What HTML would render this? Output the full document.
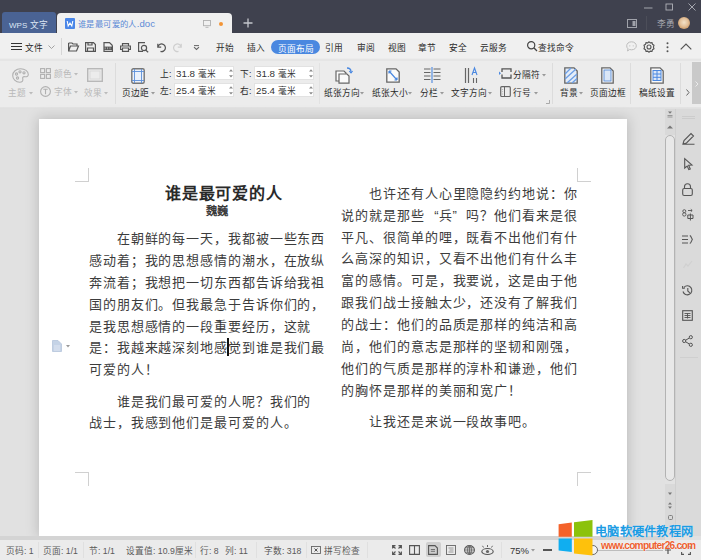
<!DOCTYPE html><html lang="zh-CN"><head><meta charset="utf-8"><style>
*{margin:0;padding:0;box-sizing:border-box}
html,body{width:701px;height:560px;overflow:hidden;background:#e1e1e1;font-family:"Liberation Sans",sans-serif;color:#333;position:relative}
.a{position:absolute;white-space:nowrap}
.m{font-size:8.7px;line-height:10px;color:#2a2a2a}
.r{font-size:8.7px;line-height:10px;color:#3a3a3a}
.dis{color:#b9b9b9}
.doc{font-size:13px;line-height:13px;letter-spacing:0.9px;color:#3c3c3c}
svg{position:absolute;overflow:visible}
</style></head><body>
<div class="a" style="left:0px;top:0px;width:701px;height:33px;background:#3f414e"></div>
<div class="a" style="left:2px;top:12px;width:54px;height:21px;background:#4a6394;border-radius:3px 3px 0 0"></div>
<div class="a m" style="left:9px;top:20px;color:#dce6f4"><span style="font-size:8px">WPS</span> 文字</div>
<div class="a" style="left:57px;top:13px;width:175px;height:21px;background:#f0f0f0;border-radius:4px 4px 0 0"></div>
<div class="a" style="left:65px;top:18px;width:10px;height:11px;background:#4a86e8;border-radius:1px"></div>
<svg style="left:65px;top:18px;" width="10" height="11" viewBox="0 0 10 11"><path d="M2.2 3 L3.2 8 L5 5 L6.8 8 L7.8 3" fill="none" stroke="#fff" stroke-width="1.1"/></svg>
<div class="a m" style="left:78px;top:19px;color:#5d8ad6;font-size:9.6px"><span style="font-size:8.3px;letter-spacing:0.4px">谁是最可爱的人</span>.doc</div>
<svg style="left:203px;top:20px;" width="8" height="8" viewBox="0 0 8 8"><rect x="0.5" y="0.5" width="7" height="5.2" fill="none" stroke="#b0b0b0" stroke-width="0.9"/><path d="M2.5 7.3 H5.5" stroke="#b0b0b0" stroke-width="0.9"/></svg>
<div class="a" style="left:218.5px;top:21.5px;width:4.5px;height:4.5px;background:#f29436;border-radius:50%"></div>
<svg style="left:243px;top:18px;" width="10" height="10" viewBox="0 0 10 10"><path d="M5 0.5 V9.5 M0.5 5 H9.5" stroke="#c4c6cc" stroke-width="1.3"/></svg>
<svg style="left:644px;top:7px;" width="9" height="2" viewBox="0 0 9 2"><path d="M0 1 H8.5" stroke="#b0b2b9" stroke-width="0.9"/></svg>
<svg style="left:665px;top:3px;" width="9" height="8" viewBox="0 0 9 8"><rect x="1" y="1" width="6.5" height="6" fill="none" stroke="#b0b2b9" stroke-width="0.9"/></svg>
<svg style="left:688px;top:3px;" width="8" height="8" viewBox="0 0 8 8"><path d="M0.5 0.5 L7.5 7.5 M7.5 0.5 L0.5 7.5" stroke="#b0b2b9" stroke-width="0.9"/></svg>
<svg style="left:627px;top:19px;" width="10" height="9" viewBox="0 0 10 9"><rect x="0.5" y="0.5" width="9" height="8" fill="none" stroke="#a0a2aa" stroke-width="1"/><rect x="5.5" y="2" width="3" height="5" fill="#a0a2aa"/></svg>
<div class="a" style="left:646px;top:16px;width:1px;height:14px;background:#4c4e59"></div>
<div class="a m" style="left:657px;top:19px;color:#a5a7ae">李勇</div>
<div class="a" style="left:678px;top:17px;width:12px;height:12px;background:radial-gradient(circle at 50% 45%,#f3e2c8 0,#e2c09a 45%,#c99560 80%,#9c7048 100%);border-radius:50%"></div>
<div class="a" style="left:0px;top:33px;width:701px;height:25px;background:#f0f0f0"></div>
<svg style="left:11px;top:42px;" width="11" height="9" viewBox="0 0 11 9"><path d="M0 1.5 H11 M0 4.5 H11 M0 7.5 H11" stroke="#333" stroke-width="1"/></svg>
<div class="a m" style="left:25px;top:43px;">文件</div>
<svg style="left:48px;top:45px;" width="7" height="4" viewBox="0 0 7 4"><path d="M0.5 0.5 L3.5 3.5 L6.5 0.5" fill="none" stroke="#999" stroke-width="0.9"/></svg>
<div class="a" style="left:61px;top:38px;width:1px;height:17px;background:#d6d6d6"></div>
<svg style="left:68px;top:42px;" width="11" height="10" viewBox="0 0 11 10"><path d="M0.6 1 H4 L5 2 H9 V3.5 M0.6 1 V9 H8.5 L10.5 4 H2.5 L0.6 9" fill="none" stroke="#555" stroke-width="1.2"/></svg>
<svg style="left:85px;top:42px;" width="11" height="10" viewBox="0 0 11 10"><path d="M0.6 0.6 H8.5 L10.4 2.5 V9.4 H0.6 Z M3 0.6 V3 H7 V0.6 M2.5 9.4 V6 H8.5 V9.4" fill="none" stroke="#555" stroke-width="1.2"/></svg>
<svg style="left:103px;top:42px;" width="10" height="10" viewBox="0 0 10 10"><path d="M9.4 3.5 L6.5 0.6 H1 V9.4 H9.4 V3.5" fill="none" stroke="#555" stroke-width="1.2"/><rect x="1" y="4.6" width="8.4" height="3.4" fill="#555"/><path d="M2.2 5.3 V7.3 M4.6 5.3 V7.3 M7 5.3 V7.3" stroke="#ddd" stroke-width="0.6"/></svg>
<svg style="left:120px;top:43px;" width="11" height="9" viewBox="0 0 11 9"><path d="M2.5 3 V0.6 H8.5 V3 M2.5 6.5 H0.6 V3 H10.4 V6.5 H8.5 M2.5 5 V8.4 H8.5 V5 Z" fill="none" stroke="#555" stroke-width="1.2"/></svg>
<svg style="left:138px;top:42px;" width="11" height="10" viewBox="0 0 11 10"><path d="M7 0.6 H0.6 V9.4 H5 M7.5 8 L10.2 10.2" fill="none" stroke="#555" stroke-width="1.2"/><circle cx="6" cy="6" r="2.6" fill="none" stroke="#555" stroke-width="1.2"/></svg>
<svg style="left:157px;top:43px;" width="9" height="9" viewBox="0 0 9 9"><path d="M0.8 0.8 V4.2 H4.2 M0.9 4 A3.8 3.8 0 1 1 3.5 8.4" fill="none" stroke="#555" stroke-width="1.2"/></svg>
<svg style="left:173px;top:43px;" width="9" height="9" viewBox="0 0 9 9"><path d="M8.2 0.8 V4.2 H4.8 M8.1 4 A3.8 3.8 0 1 0 5.5 8.4" fill="none" stroke="#cfcfcf" stroke-width="1.2"/></svg>
<svg style="left:193px;top:45px;" width="7" height="5" viewBox="0 0 7 5"><path d="M1 0.6 H6" stroke="#666" stroke-width="1"/><path d="M1 2.2 L3.5 4.4 L6 2.2" fill="none" stroke="#666" stroke-width="1.1"/></svg>
<div class="a m" style="left:216px;top:43px;">开始</div>
<div class="a m" style="left:247px;top:43px;">插入</div>
<div class="a m" style="left:325px;top:43px;">引用</div>
<div class="a m" style="left:357px;top:43px;">审阅</div>
<div class="a m" style="left:388px;top:43px;">视图</div>
<div class="a m" style="left:418px;top:43px;">章节</div>
<div class="a m" style="left:449px;top:43px;">安全</div>
<div class="a m" style="left:480px;top:43px;">云服务</div>
<div class="a" style="left:271px;top:40px;width:49px;height:14px;background:#4a88e0;border-radius:7px"></div>
<div class="a m" style="left:278px;top:44px;color:#fff">页面布局</div>
<svg style="left:527px;top:41px;" width="11" height="11" viewBox="0 0 11 11"><circle cx="4.2" cy="4.2" r="3.6" fill="none" stroke="#444" stroke-width="1.2"/><path d="M6.8 6.8 L10 10" stroke="#444" stroke-width="1.3"/></svg>
<div class="a m" style="left:538px;top:43px;">查找命令</div>
<svg style="left:626px;top:41px;" width="11" height="11" viewBox="0 0 11 11"><path d="M5.5 0.8 C8.5 0.8 10.3 2.7 10.3 4.8 C10.3 7 8.5 8.8 5.5 8.8 C4.8 8.8 4.2 8.7 3.6 8.5 L1.5 10 L2 7.8 C1.1 7 0.7 6 0.7 4.8 C0.7 2.7 2.6 0.8 5.5 0.8Z" fill="none" stroke="#bdbdbd" stroke-width="1"/><circle cx="3.8" cy="4.8" r=".6" fill="#bdbdbd"/><circle cx="7.2" cy="4.8" r=".6" fill="#bdbdbd"/></svg>
<svg style="left:643px;top:41px;" width="12" height="12" viewBox="0 0 12 12"><path d="M6 0.8 L7.3 1.9 L9 1.6 L9.5 3.3 L11 4.2 L10.4 6 L11 7.8 L9.5 8.7 L9 10.4 L7.3 10.1 L6 11.2 L4.7 10.1 L3 10.4 L2.5 8.7 L1 7.8 L1.6 6 L1 4.2 L2.5 3.3 L3 1.6 L4.7 1.9 Z" fill="none" stroke="#555" stroke-width="1.1"/><circle cx="6" cy="6" r="2" fill="none" stroke="#555" stroke-width="1.1"/></svg>
<svg style="left:666px;top:42px;" width="3" height="11" viewBox="0 0 3 11"><circle cx="1.5" cy="1.3" r="1" fill="#555"/><circle cx="1.5" cy="5.3" r="1" fill="#555"/><circle cx="1.5" cy="9.3" r="1" fill="#555"/></svg>
<svg style="left:680px;top:43px;" width="12" height="7" viewBox="0 0 12 7"><path d="M0.7 6.3 L6 1 L11.3 6.3" fill="none" stroke="#555" stroke-width="1.2"/></svg>
<div class="a" style="left:0px;top:58px;width:701px;height:49px;background:#ececec"></div>
<div class="a" style="left:0px;top:59px;width:701px;height:2px;background:#e5e5e5"></div>
<div class="a" style="left:0px;top:107px;width:701px;height:3px;background:linear-gradient(#e4e4e4,#dcdcdc)"></div>
<svg style="left:12px;top:68px;" width="17" height="15" viewBox="0 0 17 15"><path d="M8.5 0.8 C13 0.8 16.3 3.2 16.3 6.5 C16.3 8.5 14.5 9 12.8 8.7 C11 8.4 10.3 9.5 10.8 11 C11.3 12.8 10 14.2 7.8 14.2 C3.6 14.2 0.7 11 0.7 7.5 C0.7 3.7 4.2 0.8 8.5 0.8Z" fill="none" stroke="#b0b0b0" stroke-width="1.1"/><circle cx="4.5" cy="6" r="1.1" fill="none" stroke="#b0b0b0" stroke-width="1.1"/><circle cx="8" cy="3.8" r="1.1" fill="none" stroke="#b0b0b0" stroke-width="1.1"/><circle cx="12" cy="4.8" r="1.1" fill="none" stroke="#b0b0b0" stroke-width="1.1"/><circle cx="5.5" cy="10" r="1.1" fill="none" stroke="#b0b0b0" stroke-width="1.1"/></svg>
<div class="a r dis" style="left:8px;top:88px;">主题</div>
<svg style="left:29px;top:92px;" width="4" height="3" viewBox="0 0 4 3"><path d="M0 0 H4 L2 2.5Z" fill="#bbb"/></svg>
<svg style="left:40px;top:68px;" width="11" height="11" viewBox="0 0 11 11"><rect x="0.6" y="0.6" width="4" height="4" fill="none" stroke="#b0b0b0" stroke-width="1.1"/><rect x="6.4" y="0.6" width="4" height="4" fill="none" stroke="#b0b0b0" stroke-width="1.1"/><rect x="0.6" y="6.4" width="4" height="4" fill="none" stroke="#b0b0b0" stroke-width="1.1"/><rect x="6.4" y="6.4" width="4" height="4" fill="none" stroke="#b0b0b0" stroke-width="1.1"/></svg>
<div class="a r dis" style="left:54px;top:69px;">颜色</div>
<svg style="left:74px;top:73px;" width="4" height="3" viewBox="0 0 4 3"><path d="M0 0 H4 L2 2.5Z" fill="#bbb"/></svg>
<svg style="left:40px;top:86px;" width="11" height="11" viewBox="0 0 11 11"><circle cx="5.5" cy="5.5" r="4.9" fill="none" stroke="#b0b0b0" stroke-width="1.1"/><path d="M3.3 3.3 H7.7 M5.5 3.3 V8.2" fill="none" stroke="#b0b0b0" stroke-width="1.1"/></svg>
<div class="a r dis" style="left:54px;top:87px;">字体</div>
<svg style="left:74px;top:91px;" width="4" height="3" viewBox="0 0 4 3"><path d="M0 0 H4 L2 2.5Z" fill="#bbb"/></svg>
<svg style="left:87px;top:68px;" width="16" height="14" viewBox="0 0 16 14"><rect x="0.7" y="0.7" width="14.6" height="12.6" fill="none" stroke="#b8b8b8" stroke-width="1.4"/><rect x="3" y="3" width="10" height="8" fill="none" stroke="#d6d6d6" stroke-width="0.8"/></svg>
<div class="a r dis" style="left:84px;top:88px;">效果</div>
<svg style="left:104px;top:92px;" width="4" height="3" viewBox="0 0 4 3"><path d="M0 0 H4 L2 2.5Z" fill="#bbb"/></svg>
<div class="a" style="left:115px;top:63px;width:1px;height:41px;background:#dcdcdc"></div>
<svg style="left:131px;top:68px;" width="14" height="16" viewBox="0 0 14 16"><rect x="0.8" y="0.8" width="12.4" height="14.4" rx="1.5" fill="#eaf1fb" stroke="#777" stroke-width="1.4"/><path d="M3.5 1 V15 M10.5 1 V15 M1 3.5 H13 M1 12.5 H13" stroke="#5b8fd8" stroke-width="0.9"/></svg>
<div class="a m" style="left:122px;top:88px;">页边距</div>
<svg style="left:151px;top:92px;" width="4" height="3" viewBox="0 0 4 3"><path d="M0 0 H4 L2 2.5Z" fill="#999"/></svg>
<div class="a m" style="left:160px;top:69px;">上:</div>
<div class="a" style="left:174px;top:66px;width:60px;height:14px;background:#fff;border:1px solid #e2e2e2"></div>
<div class="a m" style="left:176px;top:69px;color:#333"><span style="font-size:9.8px">31.8 </span>毫米</div>
<svg style="left:229px;top:69px;" width="4" height="9" viewBox="0 0 4 9"><path d="M0 2.5 L2 0.3 L4 2.5Z M0 6.3 L2 8.5 L4 6.3Z" fill="#8a8a8a"/></svg>
<div class="a m" style="left:160px;top:86px;">左:</div>
<div class="a" style="left:174px;top:83px;width:60px;height:14px;background:#fff;border:1px solid #e2e2e2"></div>
<div class="a m" style="left:176px;top:86px;color:#333"><span style="font-size:9.8px">25.4 </span>毫米</div>
<svg style="left:229px;top:86px;" width="4" height="9" viewBox="0 0 4 9"><path d="M0 2.5 L2 0.3 L4 2.5Z M0 6.3 L2 8.5 L4 6.3Z" fill="#8a8a8a"/></svg>
<div class="a m" style="left:240px;top:69px;">下:</div>
<div class="a" style="left:254px;top:66px;width:60px;height:14px;background:#fff;border:1px solid #e2e2e2"></div>
<div class="a m" style="left:256px;top:69px;color:#333"><span style="font-size:9.8px">31.8 </span>毫米</div>
<svg style="left:309px;top:69px;" width="4" height="9" viewBox="0 0 4 9"><path d="M0 2.5 L2 0.3 L4 2.5Z M0 6.3 L2 8.5 L4 6.3Z" fill="#8a8a8a"/></svg>
<div class="a m" style="left:240px;top:86px;">右:</div>
<div class="a" style="left:254px;top:83px;width:60px;height:14px;background:#fff;border:1px solid #e2e2e2"></div>
<div class="a m" style="left:256px;top:86px;color:#333"><span style="font-size:9.8px">25.4 </span>毫米</div>
<svg style="left:309px;top:86px;" width="4" height="9" viewBox="0 0 4 9"><path d="M0 2.5 L2 0.3 L4 2.5Z M0 6.3 L2 8.5 L4 6.3Z" fill="#8a8a8a"/></svg>
<div class="a" style="left:319px;top:63px;width:1px;height:41px;background:#e2e2e2"></div>
<svg style="left:335px;top:67px;" width="18" height="17" viewBox="0 0 18 17"><path d="M1 4 H9 L11 6 V14 H1Z" fill="#fafafa" stroke="#666" stroke-width="1.2"/><path d="M4 7 H12 L14 9 V16.2 H4Z" fill="#fafafa" stroke="#666" stroke-width="1.2"/><path d="M12 1 C14.5 1 16 2.5 16 5" fill="none" stroke="#4a88e0" stroke-width="1.3"/><path d="M14.2 4 L16 6 L17.6 4" fill="none" stroke="#4a88e0" stroke-width="1.1"/></svg>
<div class="a m" style="left:324px;top:88px;">纸张方向</div>
<svg style="left:360px;top:92px;" width="4" height="3" viewBox="0 0 4 3"><path d="M0 0 H4 L2 2.5Z" fill="#999"/></svg>
<svg style="left:386px;top:68px;" width="14" height="15" viewBox="0 0 14 15"><path d="M0.8 0.8 H10 L13.2 4 V14.2 H0.8Z" fill="#fafafa" stroke="#666" stroke-width="1.3"/><path d="M3 3 L11 12 M3 3 H5.5 M3 3 V5.5 M11 12 H8.5 M11 12 V9.5" fill="none" stroke="#4a88e0" stroke-width="1.2"/></svg>
<div class="a m" style="left:372px;top:88px;">纸张大小</div>
<svg style="left:408px;top:92px;" width="4" height="3" viewBox="0 0 4 3"><path d="M0 0 H4 L2 2.5Z" fill="#999"/></svg>
<svg style="left:424px;top:67px;" width="17" height="16" viewBox="0 0 17 16"><path d="M0 2 H6.5 M0 5.5 H6.5 M0 9 H6.5 M0 12.5 H6.5 M9.5 2 H16.5 M9.5 5.5 H16.5 M9.5 9 H16.5 M9.5 12.5 H16.5" stroke="#666" stroke-width="1"/><path d="M8 0 V16" stroke="#4a88e0" stroke-width="1.1"/></svg>
<div class="a m" style="left:420px;top:88px;">分栏</div>
<svg style="left:440px;top:92px;" width="4" height="3" viewBox="0 0 4 3"><path d="M0 0 H4 L2 2.5Z" fill="#999"/></svg>
<svg style="left:464px;top:67px;" width="16" height="17" viewBox="0 0 16 17"><path d="M1.5 1 V16 M4.5 1 V16" stroke="#666" stroke-width="1.2"/><path d="M8 8 L10.5 1 L13 8 M9 5.5 H12" fill="none" stroke="#4a88e0" stroke-width="1.1"/><path d="M9.5 11 V16 M12.5 11 V16" stroke="#666" stroke-width="1.1"/></svg>
<div class="a m" style="left:451px;top:88px;">文字方向</div>
<svg style="left:488px;top:92px;" width="4" height="3" viewBox="0 0 4 3"><path d="M0 0 H4 L2 2.5Z" fill="#999"/></svg>
<svg style="left:499px;top:68px;" width="13" height="11" viewBox="0 0 13 11"><path d="M3 4 V0.8 H12 V4 M3 6.5 V10 H12 V6.5" fill="none" stroke="#555" stroke-width="1.3"/><path d="M0 3.5 L2 5.2 L0 7Z" fill="#4a88e0"/></svg>
<div class="a m" style="left:513px;top:70px;">分隔符</div>
<svg style="left:542px;top:74px;" width="4" height="3" viewBox="0 0 4 3"><path d="M0 0 H4 L2 2.5Z" fill="#999"/></svg>
<svg style="left:500px;top:86px;" width="11" height="11" viewBox="0 0 11 11"><rect x="0.7" y="0.7" width="9.6" height="9.8" rx="1" fill="none" stroke="#666" stroke-width="1.2"/><path d="M4.5 1 V10.5" stroke="#666" stroke-width="1"/><path d="M2.6 3 V3.8 M2.6 5.3 V6.1 M2.6 7.6 V8.4" stroke="#999" stroke-width="0.8"/></svg>
<div class="a m" style="left:513px;top:88px;">行号</div>
<svg style="left:534px;top:92px;" width="4" height="3" viewBox="0 0 4 3"><path d="M0 0 H4 L2 2.5Z" fill="#999"/></svg>
<svg style="left:546px;top:100px;" width="4" height="4" viewBox="0 0 4 4"><path d="M3.5 0 V3.5 H0" fill="none" stroke="#999" stroke-width="0.8"/></svg>
<div class="a" style="left:552px;top:63px;width:1px;height:41px;background:#dcdcdc"></div>
<svg style="left:564px;top:67px;" width="14" height="17" viewBox="0 0 14 17"><path d="M0.8 0.8 H10 L13.2 4 V16.2 H0.8Z" fill="#e3ecf8" stroke="#666" stroke-width="1.3"/><path d="M1 7 L7 1 M1 12 L12 2 M3 16 L13 7 M8 16 L13 11.5" stroke="#6b9ee6" stroke-width="1.3"/></svg>
<div class="a m" style="left:560px;top:88px;">背景</div>
<svg style="left:579px;top:92px;" width="4" height="3" viewBox="0 0 4 3"><path d="M0 0 H4 L2 2.5Z" fill="#999"/></svg>
<svg style="left:601px;top:67px;" width="13" height="17" viewBox="0 0 13 17"><path d="M0.8 0.8 H9 L12.2 4 V16.2 H0.8Z" fill="#fafafa" stroke="#666" stroke-width="1.3"/><rect x="3" y="3" width="7" height="11" fill="#dbe7f7" stroke="#5b8fd8" stroke-width="0.9"/></svg>
<div class="a m" style="left:590px;top:88px;">页面边框</div>
<div class="a" style="left:630px;top:63px;width:1px;height:41px;background:#dcdcdc"></div>
<svg style="left:650px;top:67px;" width="14" height="17" viewBox="0 0 14 17"><path d="M0.8 0.8 H10 L13.2 4 V16.2 H0.8Z" fill="#fafafa" stroke="#666" stroke-width="1.3"/><rect x="3" y="3.5" width="8" height="10" fill="#dbe7f7" stroke="#4a88e0" stroke-width="1"/><path d="M3 7 H11 M3 10.3 H11 M7 3.5 V13.5" stroke="#4a88e0" stroke-width="1"/></svg>
<div class="a m" style="left:639px;top:88px;">稿纸设置</div>
<div class="a" style="left:680px;top:63px;width:1px;height:41px;background:#dcdcdc"></div>
<svg style="left:686px;top:89px;" width="4" height="7" viewBox="0 0 4 7"><path d="M0.5 0.5 L3 3.5 L0.5 6.5" fill="none" stroke="#666" stroke-width="1"/></svg>
<div class="a" style="left:692px;top:62px;width:9px;height:42px;background:#c9c9c9"></div>
<svg style="left:695px;top:81px;" width="4" height="6" viewBox="0 0 4 6"><path d="M0.5 0.5 L3 3 L0.5 5.5" fill="none" stroke="#eee" stroke-width="0.9"/></svg>
<div class="a" style="left:0px;top:109px;width:665px;height:431px;background:#e1e1e1"></div>
<div class="a" style="left:39px;top:119px;width:588px;height:417px;background:#fff;box-shadow:0 0 12px 1px rgba(0,0,0,0.17)"></div>
<div class="a" style="left:88px;top:168px;width:1px;height:14px;background:#d0d0d0"></div>
<div class="a" style="left:75px;top:181px;width:14px;height:1px;background:#d0d0d0"></div>
<div class="a" style="left:577px;top:168px;width:1px;height:14px;background:#d0d0d0"></div>
<div class="a" style="left:577px;top:181px;width:14px;height:1px;background:#d0d0d0"></div>
<div class="a" style="left:75px;top:472px;width:14px;height:1px;background:#d0d0d0"></div>
<div class="a" style="left:88px;top:472px;width:1px;height:14px;background:#d0d0d0"></div>
<div class="a" style="left:577px;top:472px;width:14px;height:1px;background:#d0d0d0"></div>
<div class="a" style="left:577px;top:472px;width:1px;height:14px;background:#d0d0d0"></div>
<div class="a doc" style="left:165px;top:184.5px;font-size:16px;line-height:17px;letter-spacing:0.8px;font-weight:bold;color:#2a2a2a">谁是最可爱的人</div>
<div class="a doc" style="left:206px;top:206px;font-size:11.3px;line-height:11px;letter-spacing:0;font-weight:bold;color:#3a3a3a">魏巍</div>
<div class="a doc" style="left:116.8px;top:232.1px;">在朝鲜的每一天，我都被一些东西</div>
<div class="a doc" style="left:89.0px;top:253.95px;">感动着；我的思想感情的潮水，在放纵</div>
<div class="a doc" style="left:89.0px;top:275.8px;">奔流着；我想把一切东西都告诉给我祖</div>
<div class="a doc" style="left:89.0px;top:297.65px;">国的朋友们。但我最急于告诉你们的，</div>
<div class="a doc" style="left:89.0px;top:319.5px;">是我思想感情的一段重要经历，这就</div>
<div class="a doc" style="left:89.0px;top:341.35px;">是：我越来越深刻地感觉到谁是我们最</div>
<div class="a doc" style="left:89.0px;top:363.2px;">可爱的人！</div>
<div class="a doc" style="left:116.8px;top:394.55px;">谁是我们最可爱的人呢？我们的</div>
<div class="a doc" style="left:89.0px;top:416.4px;">战士，我感到他们是最可爱的人。</div>
<div class="a doc" style="left:369.2px;top:186.9px;">也许还有人心里隐隐约约地说：你</div>
<div class="a doc" style="left:341.4px;top:208.75px;">说的就是那些<span style="display:inline-block;width:13.9px;text-align:right;letter-spacing:0">“</span>兵<span style="display:inline-block;width:13.9px;text-align:left;letter-spacing:0">”</span>吗？他们看来是很</div>
<div class="a doc" style="left:341.4px;top:230.6px;">平凡、很简单的哩，既看不出他们有什</div>
<div class="a doc" style="left:341.4px;top:252.45px;">么高深的知识，又看不出他们有什么丰</div>
<div class="a doc" style="left:341.4px;top:274.3px;">富的感情。可是，我要说，这是由于他</div>
<div class="a doc" style="left:341.4px;top:296.15px;">跟我们战士接触太少，还没有了解我们</div>
<div class="a doc" style="left:341.4px;top:318.0px;">的战士：他们的品质是那样的纯洁和高</div>
<div class="a doc" style="left:341.4px;top:339.85px;">尚，他们的意志是那样的坚韧和刚强，</div>
<div class="a doc" style="left:341.4px;top:361.7px;">他们的气质是那样的淳朴和谦逊，他们</div>
<div class="a doc" style="left:341.4px;top:383.55px;">的胸怀是那样的美丽和宽广！</div>
<div class="a doc" style="left:369.2px;top:414.9px;">让我还是来说一段故事吧。</div>
<div class="a" style="left:227px;top:338px;width:2px;height:18px;background:#111"></div>
<svg style="left:52px;top:340px;" width="10" height="12" viewBox="0 0 10 12"><path d="M0.5 0.5 H6 L9.5 4 V11.5 H0.5Z" fill="#c5d3e6" stroke="#b5c4da" stroke-width="0.8"/><path d="M2 6 H8 M2 8 H8 M2 10 H8" stroke="#e8eef6" stroke-width="0.8"/></svg>
<svg style="left:66px;top:345px;" width="4" height="3" viewBox="0 0 4 3"><path d="M0 0 H4 L2 2.5Z" fill="#999"/></svg>
<div class="a" style="left:665px;top:109px;width:10px;height:427px;background:#e2e2e2"></div>
<div class="a" style="left:665px;top:109px;width:10px;height:26px;background:#d9d9d9"></div>
<svg style="left:667px;top:111px;" width="6" height="7" viewBox="0 0 6 7"><path d="M1 0.5 H5 L3 2.8Z" fill="#777"/><path d="M0.5 4.5 H5.5 M0.5 6 H5.5" stroke="#888" stroke-width="0.8"/></svg>
<svg style="left:667px;top:125px;" width="6" height="4" viewBox="0 0 6 4"><path d="M0 3.5 L3 0.5 L6 3.5Z" fill="#777"/></svg>
<div class="a" style="left:665px;top:135px;width:10px;height:346px;background:#e8e8e8;border:1px solid #b3b3b3;border-radius:5px"></div>
<div class="a" style="left:665px;top:484px;width:10px;height:52px;background:#d9d9d9"></div>
<svg style="left:668px;top:492px;" width="4" height="4" viewBox="0 0 4 4"><path d="M0 0.5 H4 L2 3Z" fill="#777"/></svg>
<svg style="left:668px;top:502px;" width="4" height="7" viewBox="0 0 4 7"><path d="M0 2.5 L2 0.3 L4 2.5Z M0 4.5 L2 6.7 L4 4.5Z" fill="#777"/></svg>
<svg style="left:668px;top:515px;" width="5" height="5" viewBox="0 0 5 5"><rect x="0.5" y="0.5" width="4" height="4" rx="1" fill="none" stroke="#777" stroke-width="0.9"/></svg>
<div class="a" style="left:675px;top:109px;width:26px;height:427px;background:#dadada;border-left:1px solid #d0d0d0"></div>
<div class="a" style="left:680px;top:357px;width:18px;height:1px;background:#cfcfcf"></div>
<svg style="left:682px;top:116px;" width="13" height="3" viewBox="0 0 13 3"><path d="M0 0.5 H13 M0 2.5 H13" stroke="#c8c8c8" stroke-width="0.8"/></svg>
<svg style="left:682px;top:132px;" width="13" height="13" viewBox="0 0 13 13"><path d="M1 12 L2 8.5 L9 1.5 L11.5 4 L4.5 11 Z M1 12.3 H12.5" fill="none" stroke="#555" stroke-width="1.1"/></svg>
<svg style="left:684px;top:158px;" width="9" height="12" viewBox="0 0 9 12"><path d="M0.7 0.7 L8 7 L4.6 7.3 L6.3 11 L4.8 11.6 L3.2 8 L0.7 10Z" fill="none" stroke="#555" stroke-width="1.1"/></svg>
<svg style="left:682px;top:183px;" width="11" height="13" viewBox="0 0 11 13"><path d="M2.5 5.5 V3.8 A3 3 0 0 1 8.5 3.8 V5.5" fill="none" stroke="#555" stroke-width="1.1"/><rect x="0.7" y="5.5" width="9.6" height="7" rx="1.5" fill="none" stroke="#555" stroke-width="1.1"/></svg>
<svg style="left:682px;top:208px;" width="12" height="13" viewBox="0 0 12 13"><circle cx="2.3" cy="3.2" r="1.5" fill="none" stroke="#555" stroke-width="0.9"/><circle cx="2.3" cy="6.4" r="1.7" fill="none" stroke="#555" stroke-width="0.9"/><path d="M6 2.5 H10 M8.8 1.2 L10.2 2.5 L8.8 3.8" fill="none" stroke="#555" stroke-width="0.9"/><path d="M5.8 7 H11 V10.5 H5.8Z M8.4 5.5 V12.5" fill="none" stroke="#555" stroke-width="1"/></svg>
<svg style="left:682px;top:235px;" width="11" height="10" viewBox="0 0 11 10"><path d="M0 1 H6 M0 4.5 H6 M0 8 H6 M7.8 0.6 C9.5 0.6 9.3 4.5 10.8 4.5 C9.3 4.5 9.5 8.4 7.8 8.4" fill="none" stroke="#555" stroke-width="1.1"/></svg>
<svg style="left:683px;top:260px;" width="10" height="9" viewBox="0 0 10 9"><path d="M0.5 8 L3 4 L5 6 L9 1" fill="none" stroke="#d0d0d0" stroke-width="1.2"/></svg>
<svg style="left:682px;top:285px;" width="11" height="11" viewBox="0 0 11 11"><path d="M2 2.3 A4.5 4.5 0 1 1 1 6.5 M0.6 1 V3.2 H2.8 M5.8 3 V6 L7.8 7.8" fill="none" stroke="#555" stroke-width="1.1"/></svg>
<svg style="left:682px;top:310px;" width="11" height="11" viewBox="0 0 11 11"><rect x="0.7" y="0.7" width="9.6" height="9.6" fill="none" stroke="#555" stroke-width="1.1"/><path d="M2.5 3.5 H8.5 M2.5 5.5 H8.5 M2.5 7.5 H8.5 M5.5 3 V8.5" stroke="#555" stroke-width="0.9"/></svg>
<svg style="left:682px;top:335px;" width="11" height="12" viewBox="0 0 11 12"><circle cx="8.8" cy="2.2" r="1.6" fill="none" stroke="#555" stroke-width="1"/><circle cx="2.2" cy="6" r="1.6" fill="none" stroke="#555" stroke-width="1"/><circle cx="8.8" cy="9.8" r="1.6" fill="none" stroke="#555" stroke-width="1"/><path d="M3.6 5.2 L7.4 3 M3.6 6.8 L7.4 9" stroke="#555" stroke-width="1"/></svg>
<div class="a" style="left:0px;top:536px;width:665px;height:4px;background:#d4d4d4"></div>
<div class="a" style="left:0px;top:540px;width:701px;height:20px;background:#ebebeb"></div>
<div class="a m" style="left:6px;top:546px;color:#5a5a5a">页码: 1</div>
<div class="a m" style="left:43px;top:546px;color:#5a5a5a">页面: 1/1</div>
<div class="a m" style="left:89px;top:546px;color:#5a5a5a">节: 1/1</div>
<div class="a m" style="left:126px;top:546px;color:#5a5a5a">设置值: 10.9厘米</div>
<div class="a m" style="left:200px;top:546px;color:#5a5a5a">行: 8</div>
<div class="a m" style="left:225px;top:546px;color:#5a5a5a">列: 11</div>
<div class="a m" style="left:264px;top:546px;color:#5a5a5a">字数: 318</div>
<div class="a m" style="left:324px;top:546px;color:#5a5a5a">拼写检查</div>
<div class="a m" style="left:510px;top:546px;color:#333;font-size:9.5px">75%</div>
<div class="a" style="left:38px;top:542px;width:1px;height:16px;background:#e0e0e0"></div>
<div class="a" style="left:83px;top:542px;width:1px;height:16px;background:#e0e0e0"></div>
<div class="a" style="left:195px;top:542px;width:1px;height:16px;background:#e0e0e0"></div>
<div class="a" style="left:256px;top:542px;width:1px;height:16px;background:#e0e0e0"></div>
<div class="a" style="left:306px;top:542px;width:1px;height:16px;background:#e0e0e0"></div>
<div class="a" style="left:367px;top:542px;width:1px;height:16px;background:#e0e0e0"></div>
<div class="a" style="left:501px;top:542px;width:1px;height:16px;background:#e0e0e0"></div>
<svg style="left:311px;top:546px;" width="10" height="8" viewBox="0 0 10 8"><rect x="0.5" y="0.5" width="9" height="7" fill="none" stroke="#666" stroke-width="0.9"/><path d="M3.5 2.5 L6.5 5.5 M6.5 2.5 L3.5 5.5" stroke="#444" stroke-width="0.9"/></svg>
<svg style="left:392px;top:545px;" width="10" height="10" viewBox="0 0 10 10"><path d="M0.6 3.5 V0.6 H3.5 M6.5 0.6 H9.4 V3.5 M9.4 6.5 V9.4 H6.5 M3.5 9.4 H0.6 V6.5 M1 1 L3.5 3.5 M9 1 L6.5 3.5 M9 9 L6.5 6.5 M1 9 L3.5 6.5" fill="none" stroke="#555" stroke-width="1.1"/></svg>
<svg style="left:409px;top:545px;" width="11" height="10" viewBox="0 0 11 10"><path d="M0.6 0.6 H10.4 V9.4 H0.6Z M5.5 0.6 V9.4" fill="none" stroke="#555" stroke-width="1.1"/></svg>
<div class="a" style="left:426px;top:542px;width:15px;height:15px;background:#cfcfcf;border-radius:2px"></div>
<svg style="left:428px;top:545px;" width="10" height="10" viewBox="0 0 10 10"><path d="M0.6 0.6 H7 L9.4 3 V9.4 H0.6Z" fill="none" stroke="#555" stroke-width="1.1"/><path d="M2.8 4.5 H7 M2.8 6.3 H7" stroke="#666" stroke-width="0.9"/></svg>
<svg style="left:446px;top:545px;" width="10" height="10" viewBox="0 0 10 10"><rect x="0.5" y="0.5" width="9" height="9" fill="none" stroke="#666" stroke-width="0.9"/><path d="M2.5 3 H7.5 M3.5 5 H7.5 M2.5 7 H7.5" stroke="#777" stroke-width="0.7"/></svg>
<svg style="left:464px;top:545px;" width="11" height="10" viewBox="0 0 11 10"><ellipse cx="5.5" cy="5" rx="4.9" ry="4.4" fill="none" stroke="#555" stroke-width="1.1"/><path d="M0.8 5 H10.2 M5.5 0.6 V9.4 M1.5 2.8 H9.5 M1.5 7.2 H9.5" stroke="#666" stroke-width="0.9"/><ellipse cx="5.5" cy="5" rx="2" ry="4.4" fill="none" stroke="#666" stroke-width="0.9"/></svg>
<svg style="left:481px;top:545px;" width="13" height="10" viewBox="0 0 13 10"><ellipse cx="6.5" cy="6.5" rx="5.7" ry="3" fill="none" stroke="#555" stroke-width="1.1"/><circle cx="6.5" cy="6.5" r="1.6" fill="#666"/><path d="M2.5 2.5 L1.5 0.8 M6.5 2 V0 M10.5 2.5 L11.5 0.8" stroke="#666" stroke-width="1"/></svg>
<svg style="left:531px;top:549px;" width="4" height="3" viewBox="0 0 4 3"><path d="M0 0 H4 L2 2.5Z" fill="#999"/></svg>
<div class="a" style="left:543px;top:549px;width:9px;height:2px;background:#555"></div>
<div class="a" style="left:597px;top:550px;width:66px;height:1px;background:#bdbdbd"></div>
<svg style="left:665px;top:546px;" width="6" height="8" viewBox="0 0 6 8"><path d="M3 0 V8 M0 4 H6" stroke="#555" stroke-width="1.2"/></svg>
<svg style="left:681px;top:546px;" width="10" height="9" viewBox="0 0 10 9"><path d="M0.6 3 V0.6 H3 M7 0.6 H9.4 V3 M9.4 6 V8.4 H7 M3 8.4 H0.6 V6" fill="none" stroke="#555" stroke-width="1.1"/></svg>
<div class="a" style="left:588px;top:545px;width:10px;height:10px;border:1.4px solid #6a6a6a;border-radius:50%;background:#f4f4f4"></div>
<svg style="left:558px;top:519px;" width="36" height="38" viewBox="0 0 36 38"><path d="M0.6 5.2 L13.8 3.6 V17.8 H0.6Z" fill="#f4622a"/><path d="M16 3.3 L34.5 1 V17.8 H16Z" fill="#8cc20b"/><path d="M0.6 19.5 H13.8 V33 L0.6 31.5Z" fill="#10aef0"/><path d="M16 19.5 H34.5 V36.5 L16 34.4Z" fill="#fec10c"/></svg>
<div class="a doc" style="left:595px;top:525px;font-size:12.2px;line-height:14px;letter-spacing:0.25px;font-weight:bold;color:#1c9ce3;text-shadow:0 0 1px #fff">电脑软硬件教程网</div>
<div class="a doc" style="left:601px;top:540px;font-size:10.2px;line-height:11px;letter-spacing:-0.75px;font-weight:bold;color:#ec5f30;text-shadow:0 0 1px #fff,0 0 1px #fff">www.computer26.com</div>
</body></html>
